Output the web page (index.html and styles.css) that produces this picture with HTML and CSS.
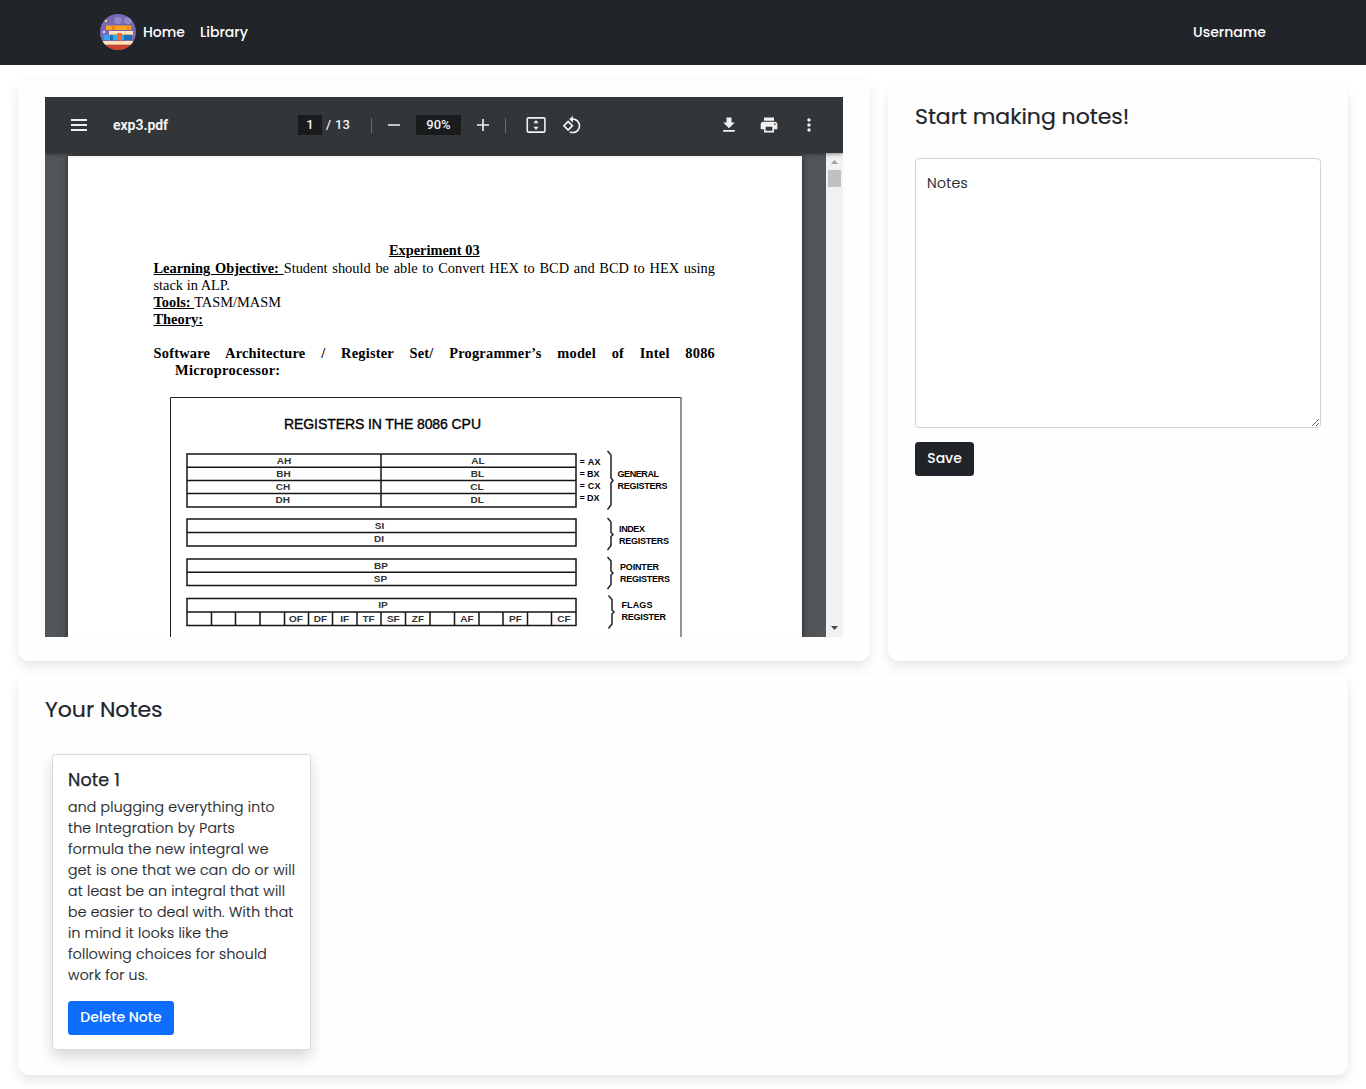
FILE: index.html
```html
<!DOCTYPE html>
<html lang="en">
<head>
<meta charset="utf-8">
<title>Notes</title>
<link rel="stylesheet" href="styles.css">
</head>
<body>
<nav class="navbar">
  <svg class="logo" viewBox="0 0 36 36">
    <defs><clipPath id="disc"><circle cx="18" cy="18" r="18"/></clipPath></defs>
    <g clip-path="url(#disc)">
      <path fill="#7768b5" d="M0 0h36v36H0z"/>
      <path fill="#ce432d" d="M0 30h36v6H0z"/>
      <circle cx="18" cy="7" r="4" fill="#9188c5"/><circle cx="28" cy="7" r="4" fill="#9188c5"/>
      <path fill="#6557a1" d="M15 9q3 3 6 0v2h-6zM25 9q3 3 6 0v2h-6z"/>
      <path fill="#f9a51d" d="M6 11.500h25V16H6z"/><path fill="#ef8315" d="M12 11.500h3V16h-3zM27 11.500h2V16h-2z"/>
      <path fill="#ffe2b5" d="M9 17h24v4H9z"/><path fill="#d8b28a" d="M9 20h23v1H9z"/>
      <path fill="#35a8e8" d="M4 21h28v5H4z"/><path fill="#1c70bb" d="M10 21h3v5h-3zM24 21h8v5h-8z"/>
      <path fill="#ffe2b5" d="M3 27h30v4H3z"/><path fill="#d8b28a" d="M3 30h29v1H3z"/>
      <path fill="#f46b37" d="M17 19h5v9l-2.500-2-2.500 2z"/>
      <circle cx="6" cy="7" r="1.300" fill="#ffc258"/><path fill="#fff" d="m4 16 .5 1.500 1.500.5-1.500.5L4 20l-.5-1.500L2 18l1.500-.5z"/>
    </g>
  </svg>
  <a class="nav-link home">Home</a>
  <a class="nav-link library">Library</a>
  <a class="nav-link user">Username</a>
</nav>
<main class="layout">
  <section class="card reader">
    <div class="viewer">
      <div class="toolbar">
        <svg class="icon" viewBox="0 0 24 24"><path d="M4 6h16v2H4zM4 11h16v2H4zM4 16h16v2H4z"/></svg>
        <span class="file">exp3.pdf</span>
        <span class="field page-no">1</span>
        <span class="page-total">/ 13</span>
        <i class="divider"></i>
        <svg class="icon minus" viewBox="0 0 24 24"><path d="M6 11h12v2H6z" opacity=".75"/></svg>
        <span class="field zoom">90%</span>
        <svg class="icon plus" viewBox="0 0 24 24"><path d="M6 11.200h5.200V6h1.600v5.200H18v1.600h-5.200V18h-1.600v-5.200H6z"/></svg>
        <i class="divider second"></i>
        <svg class="icon fit" viewBox="0 0 24 24"><rect x="3.300" y="4.900" width="17.600" height="14.200" rx="1.200" fill="none" stroke="#f1f1f1" stroke-width="1.600"/><path d="m12 7 2.600 3.200H9.400zM12 17l2.600-3.200H9.400z"/></svg>
        <svg class="icon rotate" viewBox="-2.400 -2.400 28.800 28.800"><path d="M7.340 6.410.86 12.900l6.490 6.480 6.490-6.480-6.500-6.490zM3.690 12.900l3.660-3.660L11 12.900l-3.660 3.660-3.650-3.660zm15.670-6.260C17.610 4.880 15.300 4 13 4V.76L8.760 5 13 9.240V6c1.790 0 3.580.68 4.950 2.050 2.730 2.730 2.730 7.170 0 9.900C16.580 19.320 14.790 20 13 20c-.97 0-1.940-.21-2.840-.61l-1.490 1.490C10.020 21.620 11.510 22 13 22c2.300 0 4.610-.88 6.360-2.640 3.520-3.510 3.520-9.210 0-12.720z"/></svg>
        <div class="actions">
          <svg class="icon" viewBox="-2.400 -2.400 28.800 28.800"><path d="M19 9h-4V3H9v6H5l7 7 7-7zM5 18v2h14v-2H5z"/></svg>
          <svg class="icon" viewBox="-2.400 -2.400 28.800 28.800"><path d="M19 8H5c-1.660 0-3 1.340-3 3v6h4v4h12v-4h4v-6c0-1.660-1.340-3-3-3zm-3 11H8v-5h8v5zm3-7c-.55 0-1-.45-1-1s.45-1 1-1 1 .45 1 1-.45 1-1 1zm-1-9H6v4h12V3z"/></svg>
          <svg class="icon" viewBox="-2.400 -2.400 28.800 28.800"><path d="M12 8c1.100 0 2-.9 2-2s-.9-2-2-2-2 .9-2 2 .9 2 2 2zm0 2c-1.100 0-2 .9-2 2s.9 2 2 2 2-.9 2-2-.9-2-2-2zm0 6c-1.100 0-2 .9-2 2s.9 2 2 2 2-.9 2-2-.9-2-2-2z"/></svg>
        </div>
      </div>
      <div class="stage">
        <article class="sheet">
          <h1 class="doc-title">Experiment 03</h1>
          <p class="doc-line spread"><b>Learning Objective: </b>Student should be able to Convert HEX to BCD and BCD to HEX using</p>
          <p class="doc-line">stack in ALP.</p>
          <p class="doc-line"><b>Tools: </b>TASM/MASM</p>
          <p class="doc-line"><b>Theory:</b></p>
          <h2 class="doc-head spread">Software Architecture / Register Set/ Programmer’s model of Intel 8086</h2>
          <h2 class="doc-head indent">Microprocessor:</h2>
          <svg class="diagram" viewBox="168 390 520 250">
            <path d="M170.500 640V397.500H681" fill="none" stroke="#222"/><path d="M681 397v243" stroke="#777" stroke-width="1.600"/>
            <text class="dg-title" x="284" y="429" textLength="197">REGISTERS IN THE 8086 CPU</text>
            <g class="grid">
              <path d="M187 454h389v53H187zM187 467.200h389M187 480.400h389M187 493.600h389M381 454v53"/>
              <path d="M187 519h389v27H187zM187 532.500h389"/>
              <path d="M187 559h389v26.500H187zM187 572.200h389"/>
              <path d="M187 598.500h389v27H187zM187 612h389M211.500 612v13.500M235.500 612v13.500M260 612v13.500M284.500 612v13.500M308.500 612v13.500M332.500 612v13.500M357 612v13.500M381 612v13.500M405.500 612v13.500M430 612v13.500M454.500 612v13.500M479 612v13.500M503 612v13.500M527.500 612v13.500M551.500 612v13.500"/>
            </g>
            <g class="cells" transform="scale(1.180 1)">
              <text x="240.700" y="464">AH</text><text x="240.300" y="477">BH</text><text x="239.800" y="490.300">CH</text><text x="239.600" y="503.300">DH</text>
              <text x="405.100" y="464">AL</text><text x="404.700" y="477">BL</text><text x="404.200" y="490.300">CL</text><text x="404.500" y="503.300">DL</text>
              <text x="321.600" y="529.300">SI</text><text x="321.200" y="542.500">DI</text>
              <text x="322.900" y="569">BP</text><text x="322.500" y="582.500">SP</text><text x="324.600" y="608.500">IP</text>
              <text x="250.800" y="622">OF</text><text x="271.600" y="622">DF</text><text x="292.200" y="622">IF</text><text x="312.300" y="622">TF</text><text x="333.300" y="622">SF</text><text x="354.200" y="622">ZF</text><text x="395.800" y="622">AF</text><text x="436.900" y="622">PF</text><text x="478" y="622">CF</text>
            </g>
            <g class="labels">
              <text x="579.500" y="465" textLength="21">= AX</text><text x="579.500" y="477" textLength="20">= BX</text><text x="579.500" y="489" textLength="21">= CX</text><text x="579.500" y="501" textLength="20">= DX</text>
              <text x="617.500" y="477" textLength="41.500">GENERAL</text><text x="617.500" y="489" textLength="50">REGISTERS</text>
              <text x="619" y="532" textLength="26">INDEX</text><text x="619" y="544" textLength="50">REGISTERS</text>
              <text x="620" y="570" textLength="39">POINTER</text><text x="620" y="582" textLength="50">REGISTERS</text>
              <text x="621.500" y="608" textLength="31">FLAGS</text><text x="621.500" y="620" textLength="44.500">REGISTER</text>
            </g>
            <path class="brace" d="M607.500 451l3.500 4v23l2 2.500-2 2.500v22l-3.500 4.500M607.500 518l3.500 4v10.500l2 2-2 2v9l-3.500 4.500M607.500 557l3.500 4v10l2 2-2 2v9.500l-3.500 4.500M608.500 595.500l3.500 4v10.500l2 2-2 2v10l-3.500 4.500"/>
          </svg>
        </article>
        <div class="scrollbar">
          <svg class="arrow" viewBox="0 0 17 17"><path fill="#a0a0a0" d="M5 11h7L8.500 7z"/></svg>
          <div class="thumb"></div>
          <svg class="arrow" viewBox="0 0 17 17"><path fill="#484848" d="M5 6h7l-3.500 4z"/></svg>
        </div>
      </div>
    </div>
  </section>
  <section class="card composer">
    <h2 class="heading start">Start making notes!</h2>
    <textarea class="editor" spellcheck="false">Notes</textarea>
    <button class="btn save">Save</button>
  </section>
  <section class="card saved">
    <h2 class="heading yours">Your Notes</h2>
    <article class="note">
      <h3 class="note-title">Note 1</h3>
      <p class="note-text">and plugging everything into<br>the Integration by Parts<br>formula the new integral we<br>get is one that we can do or will<br>at least be an integral that will<br>be easier to deal with. With that<br>in mind it looks like the<br>following choices for should<br>work for us.</p>
      <button class="btn delete">Delete Note</button>
    </article>
  </section>
</main>
</body>
</html>
```
FILE: styles.css
```css
* { box-sizing: border-box; }
body { margin: 0; background: #fff; color: #212529; font: 400 14px/21px Poppins, Inter, sans-serif; }
h1, h2, h3, p { margin: 0; }

.navbar { display: flex; align-items: center; height: 65px; padding: 0 100px; background: #212529; color: #fff; }
.logo { width: 36px; height: 36px; margin: 0 7px 2px 0; }
.nav-link { white-space: nowrap; font-weight: 500; }
.home { width: 57px; }
.user { margin-left: auto; }

.layout { display: grid; grid-template-columns: 852px 460px; grid-template-rows: 582px 400px; gap: 14px 18px; padding: 14px 18px; }
.card { border-radius: 11px; background: #fefefe; box-shadow: 0 5px 12px rgba(0, 0, 0, .1); }
.reader { padding: 18px 27px 24px; }
.composer { margin-top: 7px; padding: 15px 27px; }
.saved { grid-column: 1 / -1; padding: 19px 27px; }
.heading { font-size: 22px; line-height: 32px; font-weight: 400; letter-spacing: -.03px; -webkit-text-stroke: .2px #212529; }

.viewer { height: 540px; overflow: hidden; display: flex; flex-direction: column; background: #525659; }
.toolbar { position: relative; z-index: 1; flex: none; height: 56px; display: flex; align-items: center; padding: 0 22px; background: #323639; color: #f1f1f1; box-shadow: 0 1px 4px rgba(0, 0, 0, .45); font: 500 13px/20px Roboto, sans-serif; }
.icon { width: 24px; height: 24px; fill: #f1f1f1; flex: none; }
.file { width: 185px; margin-left: 22px; font-size: 14px; font-weight: 700; letter-spacing: -.05px; }
.field { height: 20px; background: #191b1c; text-align: center; }
.page-no { width: 24px; }
.page-total { width: 45px; margin: 0 0 0 4px; letter-spacing: .3px; }
.divider { width: 1px; height: 15px; background: #6a6d6f; }
.minus { margin-left: 10px; }
.zoom { width: 45px; margin: 0 10px; }
.second { margin-left: 10px; }
.fit { margin: 0 12px 0 18px; }
.actions { display: flex; gap: 16px; margin-left: auto; }

.stage { flex: 1; min-height: 0; display: flex; justify-content: space-between; padding-left: 23px; }
.sheet { width: 734px; height: 700px; margin-top: 3px; padding: 85px 87px 0 85.500px; background: #fff; box-shadow: 0 0 6px rgba(0, 0, 0, .6); color: #000; font: 14.400px/17px "Liberation Serif", serif; }
.doc-title { font-size: 14.400px; line-height: 18px; margin-bottom: 1px; text-align: center; text-decoration: underline; }
.doc-line { white-space: pre-wrap; }
.doc-line b { text-decoration: underline; }
.spread { text-align: justify; text-align-last: justify; white-space: normal; }
.doc-head { font: 700 14.400px/17px "Palatino Linotype", "Liberation Serif", serif; letter-spacing: .22px; }
.doc-line + .doc-head { margin-top: 17px; }
.indent { padding-left: 21.500px; letter-spacing: .3px; }
.diagram { display: block; width: 520px; height: 250px; margin: 11px 0 0 14.500px; font-family: "Liberation Sans", sans-serif; }
.dg-title { font-size: 14px; stroke: #000; stroke-width: .35px; }
.grid { fill: none; stroke: #151515; stroke-width: 1.500px; }
.cells { font-size: 8.500px; font-weight: 700; text-anchor: middle; fill: #333; }
.labels { font-size: 9px; font-weight: 700; }
.brace { fill: none; stroke: #222; stroke-width: 1.500px; }
.scrollbar { width: 17px; display: flex; flex-direction: column; align-items: center; background: #f1f1f1; }
.arrow { width: 17px; height: 17px; flex: none; }
.thumb { width: 13px; height: 17px; background: #c1c1c1; margin-bottom: auto; }

.editor { display: block; width: 406px; height: 270px; margin: 25px 0 14px; padding: 14px 11px; border: 1px solid #ced4da; border-radius: 4px; background: #fff; color: #212529; font: 300 14px/21px Poppins, Inter, sans-serif; letter-spacing: .3px; resize: vertical; outline: 0; -webkit-text-stroke: .2px #212529; }
.btn { display: block; height: 34px; padding: 0 0 2px; border: 0; border-radius: 3.500px; color: #fff; font: 500 14px/21px Poppins, Inter, sans-serif; white-space: nowrap; }
.save { width: 59px; background: #212529; }
.delete { width: 106px; margin-top: 14px; background: #0d6efd; }
.note { width: 259px; height: 296px; margin: 28px 0 0 7px; padding: 15px 15px 14px; border: 1px solid #d9dadb; border-radius: 3.500px; background: #fff; box-shadow: 0 7px 14px rgba(0, 0, 0, .15); }
.note-title { font-size: 17.500px; line-height: 21px; font-weight: 400; letter-spacing: .15px; margin-bottom: 6px; -webkit-text-stroke: .25px #212529; }
.note-text { font-weight: 300; letter-spacing: .23px; white-space: nowrap; margin-bottom: 15px; -webkit-text-stroke: .2px #212529; }
.note-text + .delete { margin-top: 0; }
```
